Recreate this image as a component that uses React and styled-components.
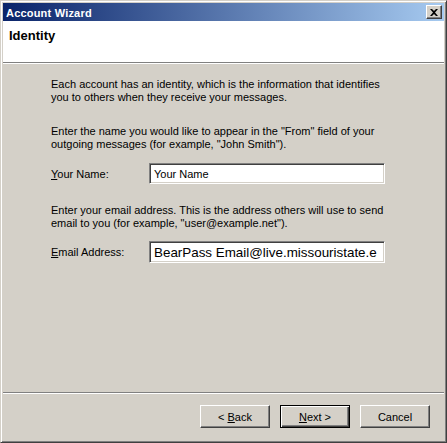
import styled, { createGlobalStyle } from 'styled-components'

const GlobalStyle = createGlobalStyle`
  html, body {
    margin: 0;
    padding: 0;
    background: #d4d0c8;
  }
  body {
    font-family: "Liberation Sans", Arial, sans-serif;
    font-size: 11px;
    color: #000000;
  }
`

const Window = styled.div`
  box-sizing: border-box;
  width: 447px;
  height: 443px;
  display: flex;
  flex-direction: column;
  background: #d4d0c8;
  border-top: 1px solid #d4d0c8;
  border-left: 1px solid #d4d0c8;
  border-right: 1px solid #404040;
  border-bottom: 1px solid #404040;
  box-shadow: inset 1px 1px 0 #ffffff, inset -1px -1px 0 #808080;
  padding: 2px;
`

const TitleBar = styled.div`
  height: 18px;
  flex: none;
  display: flex;
  align-items: center;
  justify-content: space-between;
  padding: 0 2px 0 3px;
  background: linear-gradient(to right, #0a246a, #a6caf0);
`

const TitleText = styled.span`
  color: #ffffff;
  font-weight: bold;
  font-size: 11px;
  letter-spacing: 0.2px;
  padding-top: 1px;
`

const CloseButton = styled.div`
  box-sizing: border-box;
  width: 16px;
  height: 14px;
  display: flex;
  align-items: center;
  justify-content: center;
  background: #d4d0c8;
  border-top: 1px solid #ffffff;
  border-left: 1px solid #ffffff;
  border-right: 1px solid #404040;
  border-bottom: 1px solid #404040;
  box-shadow: inset -1px -1px 0 #808080;
`

const Header = styled.div`
  height: 42px;
  flex: none;
  background: #ffffff;
  border-bottom: 1px solid #808080;
  box-shadow: 0 1px 0 #ffffff;
  padding: 7px 6px 0;
  box-sizing: border-box;
`

const HeaderTitle = styled.div`
  font-weight: bold;
  font-size: 13px;
`

const Content = styled.div`
  flex: 1;
  display: flex;
  flex-direction: column;
  padding: 15px 0 0 48px;
`

const Para = styled.p`
  margin: 0 0 ${({ $after }) => $after}px;
  line-height: 13px;
`

const FieldRow = styled.div`
  display: flex;
  align-items: center;
  margin-bottom: ${({ $after }) => $after}px;
`

const Label = styled.label`
  width: 98px;
`

const Key = styled.u`
  text-decoration: underline;
`

const TextBox = styled.div`
  box-sizing: border-box;
  width: 236px;
  height: ${({ $h }) => $h}px;
  background: #ffffff;
  border-top: 1px solid #808080;
  border-left: 1px solid #808080;
  border-right: 1px solid #ffffff;
  border-bottom: 1px solid #ffffff;
  box-shadow: inset 1px 1px 0 #404040, inset -1px -1px 0 #d4d0c8;
  display: flex;
  align-items: center;
  padding-left: 4px;
  font-size: ${({ $size }) => $size}px;
  white-space: nowrap;
  overflow: hidden;
`

const Separator = styled.div`
  flex: none;
  height: 1px;
  background: #808080;
  border-bottom: 1px solid #ffffff;
`

const ButtonRow = styled.div`
  flex: none;
  display: flex;
  justify-content: flex-end;
  gap: 10px;
  padding: 11px 14px 12px 0;
`

const Button = styled.div`
  box-sizing: border-box;
  width: 70px;
  height: 23px;
  display: flex;
  align-items: center;
  justify-content: center;
  background: #d4d0c8;
  ${({ $default }) =>
    $default
      ? `
    border: 1px solid #000000;
    box-shadow: inset 1px 1px 0 #ffffff, inset -1px -1px 0 #404040, inset -2px -2px 0 #808080;
  `
      : `
    border-top: 1px solid #ffffff;
    border-left: 1px solid #ffffff;
    border-right: 1px solid #404040;
    border-bottom: 1px solid #404040;
    box-shadow: inset -1px -1px 0 #808080;
  `}
`

function App() {
  return (
    <>
      <GlobalStyle />
      <Window>
        <TitleBar>
          <TitleText>Account Wizard</TitleText>
          <CloseButton>
            <svg width="8" height="7" viewBox="0 0 8 7">
              <path d="M0 0h2l2 2 2-2h2L5 3.5 8 7H6L4 5 2 7H0l3-3.5z" fill="#000" />
            </svg>
          </CloseButton>
        </TitleBar>
        <Header>
          <HeaderTitle>Identity</HeaderTitle>
        </Header>
        <Content>
          <Para $after={21}>
            Each account has an identity, which is the information that identifies
            <br />
            you to others when they receive your messages.
          </Para>
          <Para $after={12}>
            Enter the name you would like to appear in the "From" field of your
            <br />
            outgoing messages (for example, "John Smith").
          </Para>
          <FieldRow $after={20}>
            <Label>
              <Key>Y</Key>our Name:
            </Label>
            <TextBox $h={21} $size={11}>Your Name</TextBox>
          </FieldRow>
          <Para $after={11}>
            Enter your email address. This is the address others will use to send
            <br />
            email to you (for example, "user@example.net").
          </Para>
          <FieldRow $after={0}>
            <Label>
              <Key>E</Key>mail Address:
            </Label>
            <TextBox $h={22} $size={13.4}>BearPass Email@live.missouristate.e</TextBox>
          </FieldRow>
        </Content>
        <Separator />
        <ButtonRow>
          <Button>
            &lt;&nbsp;<Key>B</Key>ack
          </Button>
          <Button $default>
            <Key>N</Key>ext &gt;
          </Button>
          <Button>Cancel</Button>
        </ButtonRow>
      </Window>
    </>
  )
}

export default App
